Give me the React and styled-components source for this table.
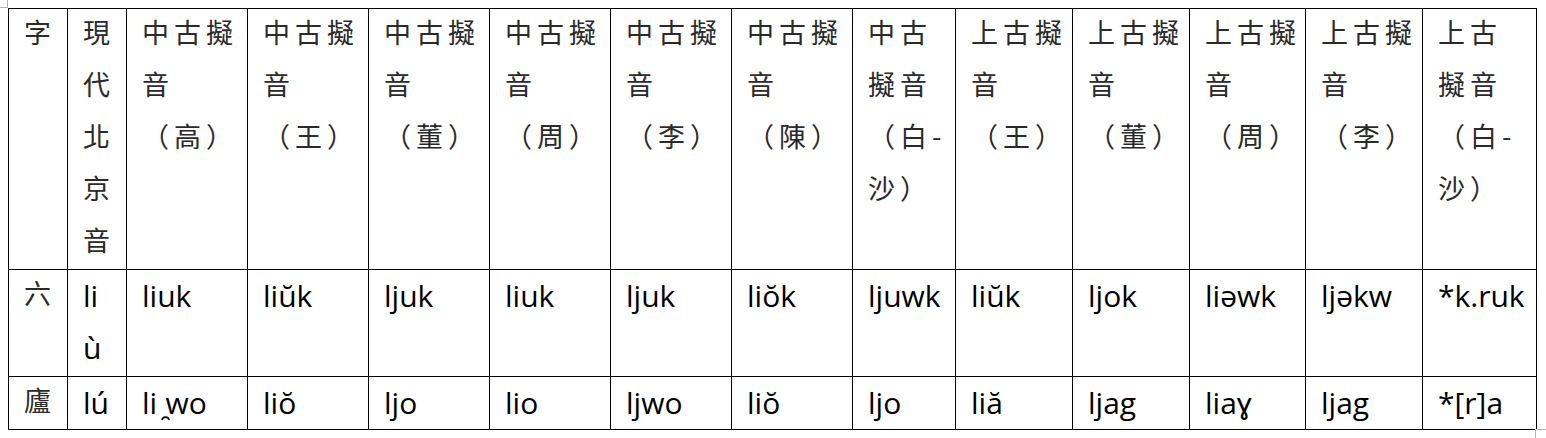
import React from 'react'
import styled, { createGlobalStyle } from 'styled-components'

const GlobalStyle = createGlobalStyle`
  html, body {
    margin: 0;
    padding: 0;
    background: #fff;
  }
`

const Page = styled.div`
  position: relative;
  width: 1546px;
  height: 438px;
  padding: 8px 0 0 8px;
  box-sizing: border-box;
  overflow: hidden;

  &::before,
  &::after {
    content: '';
    position: absolute;
    width: 7px;
    height: 7px;
    border: 0 solid #b4b4b4;
  }
  &::before {
    left: 0;
    top: 0;
    border-right-width: 1px;
    border-bottom-width: 1px;
  }
  &::after {
    left: 1535px;
    top: 429px;
    width: 11px;
    height: 9px;
    border-left-width: 1px;
    border-top-width: 1px;
  }
`

const Table = styled.table`
  border-collapse: collapse;
  table-layout: fixed;
  width: 1528px;
`

const Col = styled.col`
  width: ${p => p.$w}px;
`

const Row = styled.tr`
  height: ${p => p.$h}px;
`

const Cell = styled.td`
  border: 1px solid #000;
  padding: 0 4px 0 15px;
  vertical-align: top;
  line-height: 52px;
  font-family: "Open Sans", "Noto Sans CJK TC", sans-serif;
  font-size: 30px;
  color: #000;
  overflow: hidden;
`

const HanCell = styled(Cell)`
  font-family: "Noto Sans CJK TC", sans-serif;
  font-size: 27px;
  letter-spacing: 5px;
  color: #2a2a2a;
  line-break: strict;
`

const HanText = styled.div`
  position: relative;
  top: -3px;
`

const widths = [59, 59, 121, 121, 121, 121, 121, 121, 103, 117, 117, 116, 117, 114]

const headers = [
  '字',
  '現代北京音',
  '中古擬音（高）',
  '中古擬音（王）',
  '中古擬音（董）',
  '中古擬音（周）',
  '中古擬音（李）',
  '中古擬音（陳）',
  '中古擬音（白-沙）',
  '上古擬音（王）',
  '上古擬音（董）',
  '上古擬音（周）',
  '上古擬音（李）',
  '上古擬音（白-沙）',
]

const rows = [
  {
    char: '六',
    height: 107,
    values: [
      <>li<br />ù</>,
      'liuk', 'liŭk', 'ljuk', 'liuk', 'ljuk', 'liŏk', 'ljuwk',
      'liŭk', 'ljok', 'liəwk', 'ljəkw', '*k.ruk',
    ],
  },
  {
    char: '廬',
    height: 52,
    values: [
      'lú',
      'li\u00A0\u032Fwo', 'liŏ', 'ljo', 'lio', 'ljwo', 'liŏ', 'ljo',
      'liă', 'ljag', 'liaɣ', 'ljag', '*[r]a',
    ],
  },
]

const App = () => {
  return (
    <Page>
      <GlobalStyle />
      <Table>
        <colgroup>
          {widths.map((w, i) => <Col key={i} $w={w} />)}
        </colgroup>
        <tbody>
          <Row $h={261}>
            {headers.map(h => (
              <HanCell key={h}>
                <HanText>{h}</HanText>
              </HanCell>
            ))}
          </Row>
          {rows.map(r => (
            <Row key={r.char} $h={r.height}>
              <HanCell>
                <HanText>{r.char}</HanText>
              </HanCell>
              {r.values.map((v, i) => (
                <Cell key={i}>{v}</Cell>
              ))}
            </Row>
          ))}
        </tbody>
      </Table>
    </Page>
  )
}

export default App
